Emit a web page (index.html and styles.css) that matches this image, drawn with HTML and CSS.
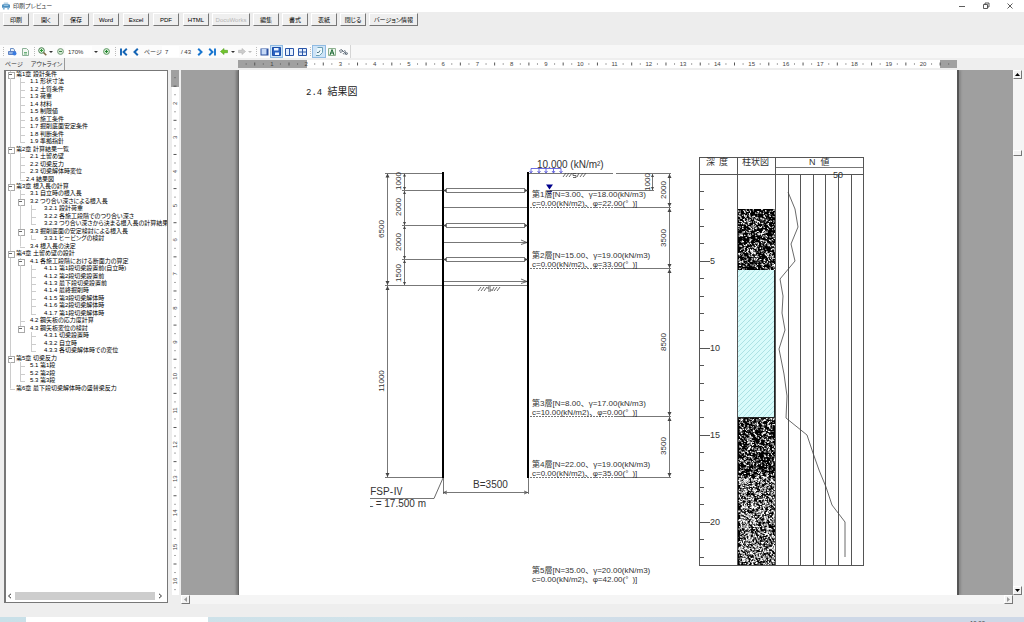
FILE: index.html
```html
<!DOCTYPE html>
<html lang="ja">
<head>
<meta charset="utf-8">
<meta name="viewport" content="width=device-width, initial-scale=1">
<title>印刷プレビュー</title>
<link rel="stylesheet" href="styles.css">
</head>
<body>
<header class="titlebar">
  <svg class="app-icon" viewBox="0 0 9 8" aria-hidden="true"><path d="M2 0h5v2H2z" fill="#b9d3e6"/><path d="M0 3l1-1h7l1 1v3H0z" fill="#4c8fc0"/><path d="M1 6h2v2H1zM6 6h2v2H6z" fill="#7ab0d6"/><path d="M2 3h5v1H2z" fill="#9cc8e4"/></svg>
  <h1 class="title">印刷プレビュー</h1>
  <div class="window-buttons">
    <button aria-label="最小化"><svg viewBox="0 0 8 8"><path d="M1 4.5h6"/></svg></button>
    <button aria-label="元に戻す"><svg viewBox="0 0 8 8"><path d="M1.500 2.500h4v4h-4zM3 2.500V1h4v4H5.500"/></svg></button>
    <button aria-label="閉じる"><svg viewBox="0 0 8 8"><path d="M1.500 1.500l5 5M6.500 1.500l-5 5"/></svg></button>
  </div>
</header>

<nav class="commands">
  <div class="command-group">
    <button>印刷</button>
    <button>開く</button>
    <button>保存</button>
    <button>Word</button>
    <button>Excel</button>
    <button>PDF</button>
    <button>HTML</button>
  </div>
  <div class="command-group tight">
    <button class="wide" disabled>DocuWorks</button>
    <button>編集</button>
    <button>書式</button>
    <button>表紙</button>
    <button>閉じる</button>
    <button class="wider">バージョン情報</button>
  </div>
</nav>

<div class="toolbar">
  <div class="tools">
    <span class="grip"></span>
    <button aria-label="印刷"><svg width="9" height="8" viewBox="0 0 9 8"><path d="M2.500 3V.5h3L6.500 2v1" fill="#e8f1fb" stroke="#6c8fc4"/><path d="M.5 3.500h7v3h-7z" fill="#8fb2e4" stroke="#5c80c4"/><circle cx="6.500" cy="5.500" r="2" fill="#3a7be0"/></svg></button>
    <button aria-label="ページ設定"><svg width="7" height="8" viewBox="0 0 7 8"><path d="M.5 .5h4l2 2v5h-6z" fill="#f2f8f2" stroke="#8ab096"/><path d="M2 4.500h3M2 6h3" stroke="#6ab078"/></svg></button>
    <span class="grip"></span>
    <button aria-label="拡大鏡"><svg width="9" height="9" viewBox="0 0 9 9"><circle cx="3.500" cy="3.500" r="2.800" fill="#e2f3df" stroke="#477f50"/><path d="M2 3.500h3M3.500 2v3" stroke="#2b9b35"/><path d="M5.600 5.600L8.300 8.300" stroke="#7b6842" stroke-width="1.500"/></svg></button>
    <button aria-label="拡大鏡の種類"><span class="caret"></span></button>
    <button aria-label="縮小"><svg width="7" height="7" viewBox="0 0 7 7"><circle cx="3.500" cy="3.500" r="2.900" fill="#d5ebd3" stroke="#779a7b"/><path d="M2 3.500h3" stroke="#3b7f46"/></svg></button>
    <input type="text" value="170%" aria-label="倍率">
    <button aria-label="倍率の一覧"><span class="caret"></span></button>
    <button aria-label="拡大"><svg width="7" height="7" viewBox="0 0 7 7"><circle cx="3.500" cy="3.500" r="2.900" fill="#d5ebd3" stroke="#5d9a63"/><path d="M2 3.500h3M3.500 2v3" stroke="#238630"/></svg></button>
    <span class="grip"></span>
    <button aria-label="最初のページ"><svg width="8" height="8" viewBox="0 0 8 8"><path d="M1 .5v7M6.800 .8L3.500 4l3.300 3.200M3 4h2" fill="none" stroke="#1565b5" stroke-width="1.900"/></svg></button>
    <button aria-label="前のページ"><svg width="6" height="8" viewBox="0 0 6 8"><path d="M4.800 .8L1.500 4l3.300 3.200" fill="none" stroke="#1565b5" stroke-width="2"/></svg></button>
    <label for="page-number">ページ</label>
    <input id="page-number" type="text" value="7">
    <span class="page-count">/ 43</span>
    <button aria-label="次のページ"><svg width="6" height="8" viewBox="0 0 6 8"><path d="M1.200 .8L4.500 4 1.200 7.200" fill="none" stroke="#1976d0" stroke-width="2"/></svg></button>
    <button aria-label="最後のページ"><svg width="8" height="8" viewBox="0 0 8 8"><path d="M7 .5v7M1.200 .8L4.500 4 1.200 7.200M3 4h2" fill="none" stroke="#1976d0" stroke-width="1.900"/></svg></button>
    <button aria-label="戻る"><svg width="8" height="7" viewBox="0 0 8 7"><path d="M.5 3.500L4 .5v1.800h3.500v2.400H4v1.800z" fill="#73c52c" stroke="#4d9d20" stroke-width=".6"/></svg></button>
    <button aria-label="戻る履歴"><span class="caret"></span></button>
    <button aria-label="進む" disabled><svg width="8" height="7" viewBox="0 0 8 7"><path d="M7.500 3.500L4 .5v1.800H.5v2.400H4v1.800z" fill="#ccc" stroke="#b4b4b4" stroke-width=".6"/></svg></button>
    <button aria-label="進む履歴" disabled><span class="caret pale"></span></button>
    <span class="grip"></span>
    <button aria-label="ページ全体"><svg width="9" height="8" viewBox="0 0 9 8"><path d="M.5 .5h8v7h-8z" fill="#2b50a0"/><path d="M1.500 1h5v5.500h-5z" fill="#c4d8f6"/></svg></button>
    <button class="pressed" aria-label="幅に合わせる" aria-pressed="true"><svg width="9" height="9" viewBox="0 0 9 9"><path d="M.5 .5h8v8h-8z" fill="#2a62c2" stroke="#1d4fa8"/><path d="M2 1h4.500v2.500H2zM3 5.500h4V8H3z" fill="#eaf3ff"/></svg></button>
    <button aria-label="見開き"><svg width="9" height="8" viewBox="0 0 9 8"><path d="M.5 .5h8v7h-8zM4.500 .5v7" fill="#e5effd" stroke="#2b56a8"/></svg></button>
    <button aria-label="複数ページ"><svg width="9" height="8" viewBox="0 0 9 8"><path d="M.5 .5h8v7h-8zM4.500 .5v7M.5 4h8" fill="#e5effd" stroke="#2b56a8"/></svg></button>
    <span class="grip"></span>
    <button class="pressed" aria-label="アウトライン表示" aria-pressed="true"><svg width="9" height="9" viewBox="0 0 9 9"><path d="M2.500 .5h5v5L4.500 8.500H1" fill="#eefafd" stroke="#6b9fb5"/><path d="M2 5.500q2 1 3-2" fill="none" stroke="#4b6d7e"/></svg></button>
    <button aria-label="文字列の検索"><svg width="8" height="8" viewBox="0 0 8 8"><path d="M.5 .5h7v7h-7z" fill="#edf6ed" stroke="#8db08f"/><path d="M2 7l2-5.500L6 7M2.500 5h3" fill="none" stroke="#1d6a35"/></svg></button>
    <button aria-label="割付"><svg width="9" height="6" viewBox="0 0 9 6"><path d="M.5 1.500l2-1 1 2-2 1zM3 1l4 4M5 1.500l2 1M4 4l1 1.500M6.500 3.500l2 .5-.5 1.500-2-.5z" fill="none" stroke="#4d5b6a" stroke-width=".8"/></svg></button>
  </div>
</div>

<main class="workspace">
  <aside class="sidebar">
    <div class="tabs" role="tablist">
      <button role="tab" aria-selected="false">ページ</button>
      <button role="tab" aria-selected="true">アウトライン</button>
    </div>
    <div class="outline">
      <ul class="tree">
        <li class="l1 open">第1章 設計条件</li>
        <li class="l2">1.1 形状寸法</li>
        <li class="l2">1.2 土質条件</li>
        <li class="l2">1.3 荷重</li>
        <li class="l2">1.4 材料</li>
        <li class="l2">1.5 制限値</li>
        <li class="l2">1.6 施工条件</li>
        <li class="l2">1.7 掘削底面安定条件</li>
        <li class="l2">1.8 判断条件</li>
        <li class="l2 last">1.9 準拠指針</li>
        <li class="l1 open">第2章 計算結果一覧</li>
        <li class="l2">2.1 土留め壁</li>
        <li class="l2">2.2 切梁反力</li>
        <li class="l2">2.3 切梁解体時変位</li>
        <li class="l2 last current">2.4 結果図</li>
        <li class="l1 open">第3章 根入長の計算</li>
        <li class="l2">3.1 自立時の根入長</li>
        <li class="l2 open">3.2 つり合い深さによる根入長</li>
        <li class="l3">3.2.1 設計荷重</li>
        <li class="l3">3.2.2 各施工段階でのつり合い深さ</li>
        <li class="l3 last">3.2.3 つり合い深さから決まる根入長の計算結果</li>
        <li class="l2 open">3.3 掘削底面の安定検討による根入長</li>
        <li class="l3 last">3.3.1 ヒービングの検討</li>
        <li class="l2 last">3.4 根入長の決定</li>
        <li class="l1 open">第4章 土留め壁の設計</li>
        <li class="l2 open">4.1 各施工段階における断面力の算定</li>
        <li class="l3">4.1.1 第1段切梁設置前(自立時)</li>
        <li class="l3">4.1.2 第2段切梁設置前</li>
        <li class="l3">4.1.3 最下段切梁設置前</li>
        <li class="l3">4.1.4 最終掘削時</li>
        <li class="l3">4.1.5 第3段切梁解体時</li>
        <li class="l3">4.1.6 第2段切梁解体時</li>
        <li class="l3 last">4.1.7 第1段切梁解体時</li>
        <li class="l2">4.2 鋼矢板の応力度計算</li>
        <li class="l2 open last">4.3 鋼矢板変位の検討</li>
        <li class="l3 end">4.3.1 切梁設置時</li>
        <li class="l3 end">4.3.2 自立時</li>
        <li class="l3 end last">4.3.3 各切梁解体時での変位</li>
        <li class="l1 open">第5章 切梁反力</li>
        <li class="l2">5.1 第1段</li>
        <li class="l2">5.2 第2段</li>
        <li class="l2 last">5.3 第3段</li>
        <li class="l1 last">第6章 最下段切梁解体時の盛替梁反力</li>
      </ul>
      <div class="outline-scroll">
        <button aria-label="左へ"><svg width="5" height="6" viewBox="0 0 5 6"><path d="M4 .8L1.500 3 4 5.200"/></svg></button>
        <span class="outline-thumb"></span>
        <button aria-label="右へ"><svg width="5" height="6" viewBox="0 0 5 6"><path d="M1 .8L3.500 3 1 5.200"/></svg></button>
      </div>
    </div>
  </aside>

  <div class="v-ruler"><svg id="v-ruler" width="10" height="525" viewBox="170 70 10 525" aria-hidden="true"></svg></div>

  <section class="viewer">
    <div class="h-ruler page-columns"><svg id="h-ruler" class="in-page" viewBox="239 58 718 12" aria-hidden="true"></svg></div>
    <div class="canvas page-columns">
      <div class="sheet in-page">
        <svg class="drawing" viewBox="239 70 718 525" role="img" aria-label="2.4 結果図">
          <defs>
            <pattern id="clay" width="5" height="5" patternUnits="userSpaceOnUse">
              <rect width="5" height="5" fill="#d8fbfb"/>
              <path d="M-1 1l2-2M0 5l5-5M4 6l2-2" stroke="#a2dcde" stroke-width=".8"/>
            </pattern>
            <clipPath id="left-cut"><rect x="370" y="480" width="90" height="40"/></clipPath>
          </defs>

          <text x="306" y="95" class="heading"><tspan class="mono">2.4 </tspan>結果図</text>

          <!-- dimension and level lines -->
          <g class="line">
            <path d="M385 173.500H443M387.500 173V477M404.500 173V286M402 190.500H446M402 225.500H446M402 259.500H446M385 285.500H528M385 477.500H443"/>
            <path d="M443 207.500H528M443 242.500H528M443 281.500H528"/>
            <path d="M446.500 188.500h78v4h-78zM446.500 223.500h78v4h-78zM446.500 257.500h78v4h-78z"/>
            <path d="M528 173.500H613M616 173.500H671M550 190.500H654M652.500 173V190M669.500 173V477"/>
            <path d="M616 207.500H671M616 268.500H671M616 416.500H671M616 477.500H671"/>
            <path d="M443.500 478V494M528.500 478V494M443 492.500H528M370 498.500H434"/>
          </g>
          <path class="line" stroke-dasharray="2 1" d="M530 207.500H616M530 268.500H616M530 416.500H616M530 477.500H616"/>
          <path class="fine" d="M434 498.500L443 478"/>
          <path class="wall" d="M443 172V478M528 172V478"/>
          <path class="fine" d="M521 240l6 2.500-6 2M521 279l6 2.500-6 2M447 491l-3.500 1.500 3.500 1.500M524 491l3.500 1.500-3.500 1.500"/>
          <path d="M387.500 173.500l-2 4h4zM387.500 285l-2-4h4zM387.500 286l-2 4h4zM387.500 477l-2-4h4zM404.500 173.500l-1.500 3h3zM404.500 190l-1.500-3h3zM404.500 191l-1.500 3h3zM404.500 225l-1.500-3h3zM404.500 226l-1.500 3h3zM404.500 259l-1.500-3h3zM404.500 260l-1.500 3h3zM404.500 285l-1.500-3h3zM669.500 174l-2 4h4zM669.500 207l-2-4h4zM669.500 208l-2 4h4zM669.500 268l-2-4h4zM669.500 269l-2 4h4zM669.500 416l-2-4h4zM669.500 417l-2 4h4zM669.500 477l-2-4h4zM652.500 174l-1.500 3h3zM652.500 190l-1.500-3h3zM443 190.500l3-1.500v3zM443 225.500l3-1.500v3zM443 259.500l3-1.500v3zM528 190.500l-3-1.500v3zM528 225.500l-3-1.500v3zM528 259.500l-3-1.500v3z" fill="#444"/>
          <path class="fine" d="M478 291l3-4M481 291l3-4M484 291l3-4M491 287h-3v2h3v2h-3M492 291l2-4M494 291l3-4M497 291l3-4M563 177l3-4M566 177l3-4M569 177l3-4M576 173.500h-3v2h3v2h-3M577 177l2-4M580 177l3-4M583 177l3-4"/>

          <!-- surcharge and water level -->
          <path d="M531 172.500V168.500H561V172M539 168.500v4M546 168.500v4M553.500 168.500v4M529.500 171l1.500 2 1.500-2M537.500 171l1.500 2 1.500-2M544.500 171l1.500 2 1.500-2M552 171l1.500 2 1.500-2M559.500 171l1.500 2 1.500-2" fill="none" stroke="#4747d8" stroke-width=".8"/>
          <path d="M546 184.500h7l-3.500 5z" fill="#00008c"/>
          <path d="M547 191.500h5M548 193.500h3" stroke="#2222b8"/>

          <g class="label big">
            <text x="537" y="168">10.000 (kN/m²)</text>
            <text x="490.500" y="488" text-anchor="middle">B=3500</text>
            <g clip-path="url(#left-cut)">
              <text x="403" y="495" text-anchor="end">FSP-Ⅳ</text>
              <text x="426" y="507" text-anchor="end">L = 17.500 m</text>
            </g>
          </g>
          <g class="label">
            <text x="532" y="197">第1層[N=3.00、γ=18.00(kN/m3)</text>
            <text x="532" y="206">c=0.00(kN/m2)、φ=22.00(°<tspan dx="4">)]</tspan></text>
            <text x="532" y="258">第2層[N=15.00、γ=19.00(kN/m3)</text>
            <text x="532" y="267">c=0.00(kN/m2)、φ=33.00(°<tspan dx="4">)]</tspan></text>
            <text x="532" y="406">第3層[N=8.00、γ=17.00(kN/m3)</text>
            <text x="532" y="415">c=10.00(kN/m2)、φ=0.00(°<tspan dx="4">)]</tspan></text>
            <text x="532" y="467">第4層[N=22.00、γ=19.00(kN/m3)</text>
            <text x="532" y="476">c=0.00(kN/m2)、φ=35.00(°<tspan dx="4">)]</tspan></text>
            <text x="532" y="573">第5層[N=35.00、γ=20.00(kN/m3)</text>
            <text x="532" y="582">c=0.00(kN/m2)、φ=42.00(°<tspan dx="4">)]</tspan></text>
          </g>
          <g class="label" text-anchor="middle">
            <text transform="translate(401 181) rotate(-90)">1000</text>
            <text transform="translate(401 207) rotate(-90)">2000</text>
            <text transform="translate(401 242) rotate(-90)">2000</text>
            <text transform="translate(401 273) rotate(-90)">1500</text>
            <text transform="translate(384 229) rotate(-90)">6500</text>
            <text transform="translate(384 381) rotate(-90)">11000</text>
            <text transform="translate(650 182) rotate(-90)">1000</text>
            <text transform="translate(666 190) rotate(-90)">2000</text>
            <text transform="translate(666 238) rotate(-90)">3500</text>
            <text transform="translate(666 342) rotate(-90)">8500</text>
            <text transform="translate(666 446) rotate(-90)">3500</text>
          </g>

          <!-- boring log -->
          <rect x="738" y="270" width="37" height="147" fill="url(#clay)"/>
          <rect x="738" y="209" width="38" height="61"/>
          <rect x="738" y="417" width="38" height="148"/>
          <path id="sand" fill="#fff"/>
          <path class="line dark" d="M699.500 157.500H863.500V565.500H699.500ZM699.500 174.500H863.500M737.500 157.500V565.500M775.500 157.500V565.500M788.500 174V565M800.500 174V565M813.500 174V565M825.500 174V565M838.500 174V565M851.500 174V565"/>
          <path class="line" d="M775.500 167.500H863"/>
          <path d="M774.500 270V417.500H738" fill="none" stroke="#222"/>
          <path id="depth-ticks" class="line dark"/>
          <path class="fine" d="M788 192L795 209 798 227 791 244 795 261 780 279 783 296 782 313 785 330 779 349 784 374 787 396 786 418 807 435 813 453 819 470 826 487 832 505 845 522V557"/>
          <g class="label head">
            <text x="706" y="165">深<tspan dx="4">度</tspan></text>
            <text x="742" y="165">柱状図</text>
            <text x="809" y="165">N<tspan dx="5">値</tspan></text>
            <text x="838" y="178" text-anchor="middle">50</text>
            <text x="710" y="264">5</text>
            <text x="710" y="351">10</text>
            <text x="710" y="438">15</text>
            <text x="710" y="525">20</text>
          </g>
        </svg>
      </div>
    </div>
    <div class="h-scroll">
      <button aria-label="左へ"><svg width="3" height="5" viewBox="0 0 3 5"><path d="M3 0v5L0 2.500z"/></svg></button>
      <button aria-label="右へ"><svg width="3" height="5" viewBox="0 0 3 5"><path d="M0 0v5l3-2.500z"/></svg></button>
    </div>
  </section>

  <div class="v-scroll">
    <button aria-label="上へ"><svg width="5" height="3" viewBox="0 0 5 3"><path d="M0 3h5L2.500 0z"/></svg></button>
    <span class="v-thumb"></span>
    <button aria-label="下へ"><svg width="5" height="3" viewBox="0 0 5 3"><path d="M0 0h5L2.500 3z"/></svg></button>
  </div>
</main>

<div class="status"></div>
<footer class="taskbar"><span class="task"></span><span class="clock">10:00</span></footer>
<script src="main.js"></script>
</body>
</html>
```

FILE: styles.css
```css
* {
  box-sizing: border-box;
}

body {
  display: flex;
  flex-direction: column;
  height: 100vh;
  margin: 0;
  overflow: hidden;
  background: #eee;
  color: #333;
  font: 6px/8px "Liberation Sans", "Noto Sans CJK JP", sans-serif;
  font-feature-settings: "palt";
}

button,
input {
  min-width: 0;
  margin: 0;
  padding: 0;
  border: 0;
  background: transparent;
  color: inherit;
  font: inherit;
  font-feature-settings: inherit;
}

svg {
  display: block;
}

/* Title bar */
.titlebar {
  display: flex;
  flex: none;
  align-items: center;
  gap: 3px;
  height: 12px;
  padding: 0 10px 0 2px;
  background: #fff;
}

.app-icon {
  width: 8px;
  height: 8px;
}

.title {
  margin: 0;
  font-size: 6px;
  font-weight: 400;
}

.window-buttons {
  display: flex;
  gap: 16px;
  margin-left: auto;
}

.window-buttons svg {
  width: 8px;
  height: 8px;
  fill: none;
  stroke: #333;
  stroke-width: 0.8;
}

/* Command buttons */
.commands {
  display: flex;
  flex: none;
  gap: 3px;
  height: 33px;
  padding: 1px 3px;
  background: #ededed;
}

.command-group {
  display: flex;
  gap: 4px;
}

.tight {
  gap: 3px;
}

.command-group button {
  width: 26px;
  height: 13px;
  border: 1px solid;
  border-color: #fff #777 #777 #fff;
  background: #efefef;
  color: #000;
}

.command-group .wide {
  width: 38px;
}

.command-group .wider {
  width: 49px;
}

.command-group button:disabled {
  color: #b5b5b5;
}

/* Toolbar */
.toolbar {
  flex: none;
  height: 13px;
  background: #f7f7f7;
}

.tools {
  display: grid;
  grid-template-columns:
    6px 13px 12px 6px 10px 8px 10px 27px 8px 12px 6px 11px 13px 20px 17px
    16px 10px 13px 11px 7px 11px 6px 6px 11px 13px 13px 13px 3px 14px 11px 13px;
  align-items: center;
  width: max-content;
  height: 13px;
  border-right: 1px solid #d5d5d5;
  background: #fcfcfc;
}

.tools button {
  display: flex;
  align-items: center;
  justify-content: center;
  height: 13px;
}

.tools input {
  width: 100%;
  height: 11px;
  padding-left: 3px;
  background: #fff;
}

.tools label,
.page-count {
  padding-left: 2px;
}

.tools .pressed {
  border: 1px solid #8fbbe3;
  background: #cfe4f7;
}

.grip {
  justify-self: center;
  height: 9px;
  border-left: 1px dotted #bbb;
}

.caret {
  border: 2px solid transparent;
  border-top-color: #333;
  border-bottom: 0;
}

.pale {
  border-top-color: #bbb;
}

/* Workspace */
.workspace {
  display: flex;
  flex: 1;
  min-height: 0;
}

.sidebar {
  display: flex;
  flex: none;
  flex-direction: column;
  width: 168px;
  padding-left: 4px;
}

.tabs {
  display: flex;
  flex: none;
  gap: 6px;
  height: 12px;
}

.tabs button {
  padding: 0 1px;
}

.tabs [aria-selected="true"] {
  padding-right: 2px;
  border-right: 1px solid #999;
}

.outline {
  display: flex;
  flex: 1;
  flex-direction: column;
  min-height: 0;
  margin-bottom: 1px;
  overflow: hidden;
  border: 1px solid #777;
  border-width: 1px 1px 1px 2px;
  background: #fff;
}

.tree {
  display: grid;
  grid-auto-rows: 1fr;
  height: 321px;
  margin: 0;
  padding: 0;
  list-style: none;
  color: #000;
  line-height: 7px;
  white-space: nowrap;
}

/* Every row draws the trunk lines that pass through it. */
.tree li {
  position: relative;
  background: linear-gradient(#ccc, #ccc) 4px 0 / 1px 100% no-repeat;
}

.tree .l1 {
  padding-left: 10px;
}

.tree .l2 {
  padding-left: 24px;
}

.tree .l3 {
  padding-left: 38px;
}

.tree .current {
  padding-left: 20px;
}

.tree .l2,
.tree .l3 {
  background:
    linear-gradient(#ccc, #ccc) 4px 0 / 1px 100% no-repeat,
    linear-gradient(#ccc, #ccc) 14px 0 / 1px 100% no-repeat;
}

.tree .l3.end {
  background: linear-gradient(#ccc, #ccc) 4px 0 / 1px 100% no-repeat;
}

.tree .l2.last {
  background:
    linear-gradient(#ccc, #ccc) 4px 0 / 1px 100% no-repeat,
    linear-gradient(#ccc, #ccc) 14px 0 / 1px 50% no-repeat;
}

.tree .l1.last {
  background: linear-gradient(#ccc, #ccc) 4px 0 / 1px 50% no-repeat;
}

.tree li::before {
  content: "";
  position: absolute;
  top: 0;
  left: 14px;
  width: 5px;
  height: 4px;
  border-bottom: 1px solid #ccc;
}

.tree .l1::before {
  left: 4px;
}

.tree .l3::before {
  left: 25px;
  height: 100%;
  border-bottom: 0;
  background:
    linear-gradient(#ccc, #ccc) 0 0 / 1px 100% no-repeat,
    linear-gradient(#ccc, #ccc) 0 4px / 5px 1px no-repeat;
}

.tree .l3.last::before {
  height: 5px;
}

.tree .open::after {
  content: "";
  position: absolute;
  top: 1px;
  left: 12px;
  width: 5px;
  height: 5px;
  border: 1px solid #aaa;
  background: linear-gradient(#666, #666) 0 1px / 3px 1px no-repeat #fff;
}

.tree .l1.open::after {
  left: 2px;
}

.outline-scroll {
  display: flex;
  flex: none;
  align-items: center;
  gap: 3px;
  height: 12px;
  margin-top: auto;
  padding: 0 4px 0 1px;
}

.outline-scroll svg {
  fill: none;
  stroke: #333;
}

.outline-thumb {
  flex: 1;
  height: 8px;
  background: #cdcdcd;
}

.v-ruler {
  flex: none;
  width: 13px;
  padding: 12px 0 0 2px;
  overflow: hidden;
}

.viewer {
  display: flex;
  flex: 1;
  flex-direction: column;
  min-width: 0;
}

.page-columns {
  display: grid;
  grid-template-columns: 58fr 718fr 56fr;
}

.in-page {
  grid-column: 2;
}

.h-ruler {
  flex: none;
}

.h-ruler svg {
  width: 100%;
  overflow: visible;
}

.ruler-text {
  fill: #444;
  font-size: 6px;
  text-anchor: middle;
}

.canvas {
  flex: 1;
  min-height: 0;
  overflow: hidden;
  background: #9f9f9f;
}

.sheet {
  background: #fff;
  box-shadow: -1px 0 #666, -3px 0 2px #777, 2px 0 #555, 4px 0 2px #888;
}

.drawing {
  width: 100%;
}

.line {
  fill: none;
  stroke: #777;
  shape-rendering: crispEdges;
}

.dark {
  stroke: #555;
}

.fine {
  fill: none;
  stroke: #444;
  stroke-width: 0.8;
}

.wall {
  stroke: #000;
  stroke-width: 2;
}

.label {
  fill: #333;
  font-size: 8px;
  font-feature-settings: normal;
}

.big {
  font-size: 10px;
}

.head {
  font-size: 9px;
}

.heading {
  fill: #222;
  font-size: 10px;
  font-feature-settings: normal;
}

.mono {
  font-family: "Liberation Mono", monospace;
  font-size: 9px;
}

/* Scroll bars */
.h-scroll {
  display: flex;
  flex: none;
  justify-content: space-between;
  height: 9px;
  background: #f5f5f5;
}

.v-scroll {
  display: flex;
  flex: none;
  flex-direction: column;
  width: 11px;
  margin: 12px 0 9px;
  padding-right: 2px;
  background: #f5f5f5;
}

.h-scroll button,
.v-scroll button,
.v-thumb {
  display: flex;
  align-items: center;
  justify-content: center;
  width: 9px;
  height: 9px;
  border: 1px solid;
  border-color: #fff #777 #777 #fff;
  background: #f3f3f3;
}

.h-scroll svg {
  fill: #999;
}

.v-scroll .v-thumb {
  height: 6px;
  margin: 71px 0 auto;
}

/* Bottom edge */
.status {
  flex: none;
  height: 13px;
}

.taskbar {
  display: flex;
  flex: none;
  justify-content: space-between;
  height: 5px;
  padding: 0 39px 0 26px;
  overflow: hidden;
  background: linear-gradient(90deg, #c9e0e8, #d2e3ea 40%, #ced8e7 80%);
}

.task {
  width: 182px;
  background: #fff;
}

.clock {
  padding-top: 2px;
}
```

FILE: main.js
```js
const NS = "http://www.w3.org/2000/svg";

function add(parent, tag, attrs, text) {
  const el = document.createElementNS(NS, tag);
  for (const key in attrs) el.setAttribute(key, attrs[key]);
  if (text !== undefined) el.textContent = text;
  parent.appendChild(el);
}

// Horizontal ruler: one number per 34.27 units, with three marks between.
const hr = document.getElementById("h-ruler");
add(hr, "rect", { x: 238, y: 60, width: 719, height: 8, fill: "#fff" });
add(hr, "rect", { x: 238, y: 60, width: 69, height: 8, fill: "#a0a0a0" });
add(hr, "rect", { x: 940, y: 60, width: 17, height: 8, fill: "#a0a0a0" });
let marks = "";
for (let i = 1; i < 84; i++) {
  const x = 237.6 + (34.27 * i) / 4;
  if (i % 4 === 0) {
    add(hr, "text", { x, y: 66, class: "ruler-text" }, i / 4);
  } else {
    const half = i % 2 === 0 ? 1.5 : 0.5;
    marks += `M${x} ${64 - half}v${half * 2}`;
  }
}
add(hr, "path", { d: marks, stroke: "#555" });

// Vertical ruler.
const vr = document.getElementById("v-ruler");
add(vr, "rect", { x: 172, y: 70, width: 7, height: 525, fill: "#fff" });
add(vr, "rect", { x: 171, y: 70, width: 8, height: 17, fill: "#a0a0a0" });
marks = "";
for (let i = 5; i < 66; i++) {
  const y = 35 + (34.13 * i) / 4;
  if (i % 4 === 0) {
    add(vr, "text", { transform: `translate(177 ${y}) rotate(-90)`, class: "ruler-text" }, i / 4);
  } else {
    const half = i % 2 === 0 ? 1.5 : 0.5;
    marks += `M${175 - half} ${y}h${half * 2}`;
  }
}
add(vr, "path", { d: marks, stroke: "#555" });

// Depth scale, one tick per metre.
let ticks = "";
for (let n = 1; n <= 22; n++) {
  ticks += `M699 ${Math.floor(174.3 + 17.4 * n) + 0.5}h${n % 5 === 0 ? 11 : 5}`;
}
document.getElementById("depth-ticks").setAttribute("d", ticks);

// Sand grains, from a fixed seed so that every load looks the same.
let seed = 7;
function random() {
  seed = (seed * 1103515245 + 12345) % 2147483648;
  return seed / 2147483648;
}
function grains(top, bottom, count) {
  let d = "";
  for (let i = 0; i < count; i++) {
    const x = (738 + random() * 36.5).toFixed(1);
    const y = (top + random() * (bottom - top - 1)).toFixed(1);
    const s = (0.5 + random() * 0.9).toFixed(1);
    d += `M${x} ${y}h${s}l.4 ${s}h-${s}z`;
  }
  return d;
}
document.getElementById("sand").setAttribute(
  "d",
  grains(209, 270, 750) + grains(417, 480, 800) + grains(478, 565, 2100)
);
```
